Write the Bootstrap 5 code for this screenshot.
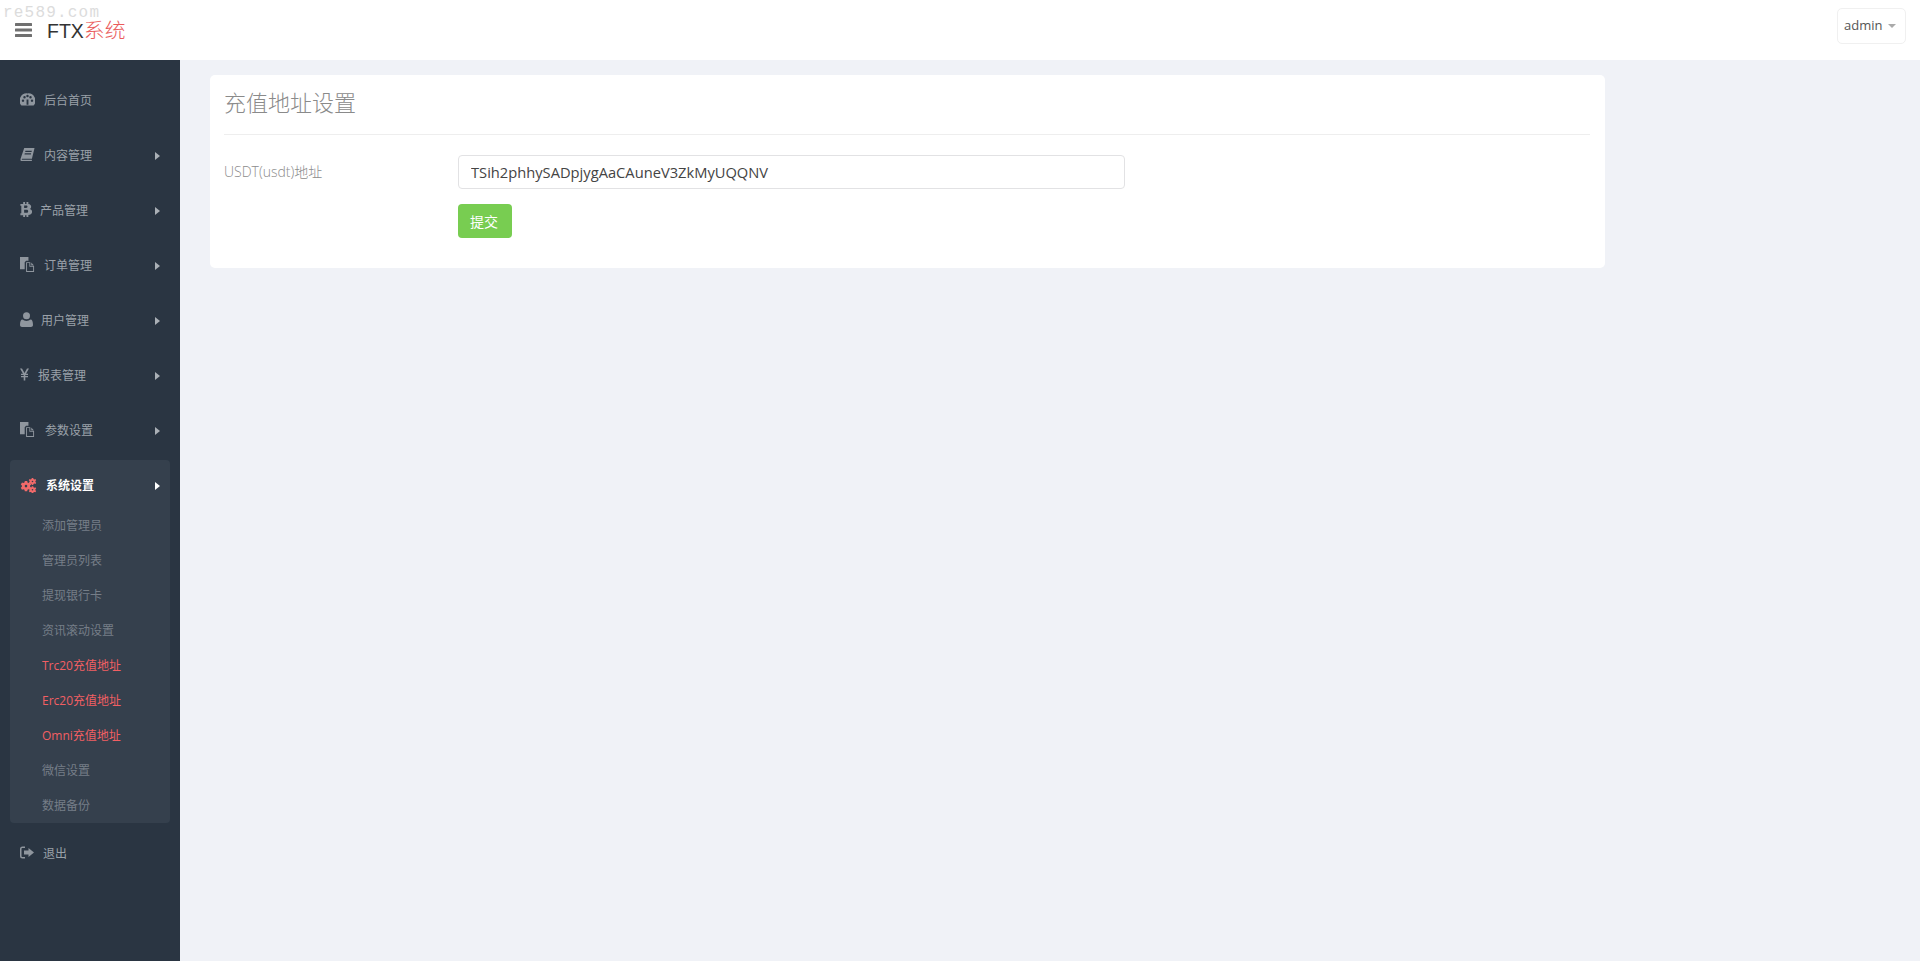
<!DOCTYPE html>
<html lang="zh-CN">
<head>
<meta charset="utf-8">
<title>FTX系统</title>
<link rel="stylesheet" href="https://cdn.jsdelivr.net/npm/bootstrap@5.3.0/dist/css/bootstrap.min.css">
<style>
html,body{height:100%;overflow:hidden}
body{background:#f0f2f7;font-family:"Open Sans","Noto Sans CJK SC",sans-serif;font-size:13px;color:#888}
.topbar{height:60px;background:#fff;padding:0 14px 0 15px;position:relative}
.watermark{position:absolute;left:3px;top:7px;font-family:"Liberation Mono",monospace;font-size:16px;letter-spacing:1.2px;color:#dcdcdc;line-height:12px}
.burger{width:17px;height:14px;margin-top:0;color:#707070}
.brand{font-size:19.5px;margin-left:15px;color:#333;line-height:20px;font-family:"Liberation Sans","Noto Sans CJK SC",sans-serif;font-weight:300;margin-top:1px}
.brand span{color:#ea5a5a;font-size:20.8px}
.userbtn{height:36px;width:69px;border:1px solid #f0f0f0;border-radius:5px;background:#fff;color:#555;font-size:13px;padding:0 0 0 6px;margin-top:-9px;text-align:left}
.caretmark{display:inline-block;border-left:4px solid transparent;border-right:4px solid transparent;border-top:4px solid #aaa;margin-left:6px;vertical-align:2px}
.layout{height:901px}
.sidebar{width:180px;flex:none;background:#2a3542;padding:18px 10px 0;font-size:12px}
.menuitem{height:45px;margin-bottom:10px;padding:0 10px;color:#9aa1a9;text-decoration:none}
.menuicon{width:15px;height:15px;fill:#8f969e;flex:none;margin-top:-2px}
.menuarrow{border-top:4px solid transparent;border-bottom:4px solid transparent;border-left:5px solid #aab0b6;margin-left:auto;margin-right:0}
.activegroup{background:#35404d;border-radius:4px;margin-top:-3px;margin-bottom:8px;height:363px}
.activegroup .menuitem{color:#fff;margin-bottom:0;height:48px;padding-top:4px;font-weight:600}
.activegroup .menuarrow{border-left-color:#fff}
.activegroup .menuicon{fill:#f26a6a;width:17px}
.submenu a{display:block;height:35px;line-height:35px;padding-left:32px;color:#767e88;text-decoration:none}
.submenu a.hot{color:#f25f63}
.mainarea{padding:15px 0 0 30px;width:1425px}
.panel{background:#fff;border-radius:5px;padding:0 15px 0 14px;height:193px;width:1395px}
.paneltitle{font-size:22px;font-weight:300;color:#8a8a8a;height:60px;line-height:54px;border-bottom:1px solid #eee;margin:0}
.fieldrow{margin-top:20px}
.fieldlabel{width:234px;flex:none;font-weight:300;line-height:34px;color:#8c8c8c;font-size:14px}
.addr{width:667px;height:34px;border:1px solid #e2e2e4;border-radius:4px;padding:0 12px;color:#444;font-size:14.7px;font-family:"Open Sans",sans-serif}
.submitbtn{display:block;width:54px;height:34px;margin:15px 0 0 234px;background:#78cd51;border:0;border-radius:4px;color:#fff;font-size:14px;padding:0 2px 0 0}
</style>
</head>
<body>
<header class="topbar d-flex align-items-center">
  <div class="watermark">re589.com</div>
  <svg class="burger" viewBox="0 0 17 14" fill="currentColor"><rect width="17" height="3" rx=".5"/><rect y="5.500" width="17" height="3" rx=".5"/><rect y="11" width="17" height="3" rx=".5"/></svg>
  <div class="brand">FTX<span>系统</span></div>
  <div class="ms-auto d-flex align-items-center"><button class="userbtn" type="button">admin<i class="caretmark"></i></button></div>
</header>
<div class="layout d-flex">
  <nav class="sidebar">
    <a class="menuitem d-flex align-items-center" href="#"><svg class="menuicon" viewBox="0 0 16 16"><path fill-rule="evenodd" d="M8 1.500A7.800 7.800 0 0 0 1.500 14.500h13A7.800 7.800 0 0 0 8 1.500ZM3.200 10.500a1.300 1.300 0 1 1 0-2.600 1.300 1.300 0 0 1 0 2.600Zm1.600-3.600a1.300 1.300 0 1 1 0-2.600 1.300 1.300 0 0 1 0 2.600ZM8 5.500a1.300 1.300 0 1 1 0-2.600 1.300 1.300 0 0 1 0 2.600Zm3.200 1.400a1.300 1.300 0 1 1 0-2.600 1.300 1.300 0 0 1 0 2.600Zm1.600 3.600a1.300 1.300 0 1 1 0-2.600 1.300 1.300 0 0 1 0 2.600ZM7 13.500V8h2v5.500Z"/></svg><span style="margin-left:9px">后台首页</span></a>
    <a class="menuitem d-flex align-items-center" href="#"><svg class="menuicon" viewBox="0 0 16 16"><path fill-rule="evenodd" d="M4.500 1H15.500l-2.800 11.500H2.800c-.7 0-.9.5-.8 1h10.500l.3.500-.3 1H1.800C.6 15 .3 14 .6 12.500Zm1.300 3-.3 1.200h6.800l.3-1.200Zm-.7 2.700-.3 1.200h6.800l.3-1.200Z"/></svg><span style="margin-left:9px">内容管理</span><i class="menuarrow"></i></a>
    <a class="menuitem d-flex align-items-center" href="#"><svg class="menuicon" style="width:12px" viewBox="0 0 12 16"><path fill-rule="evenodd" d="M3 0h2v2h1.500V0h2v2.200c2 .3 3 1.400 3 2.800 0 1.200-.7 2-1.600 2.400 1.500.4 2.600 1.400 2.600 2.900 0 2-1.500 3.300-4 3.500V16h-2v-2H5v2H3v-2H0v-2h1V4H0V2h3Zm1 3.800v2.500h2.200c.9 0 1.400-.5 1.400-1.200S7.100 3.800 6.200 3.800Zm0 4.400v3.300h2.700c1 0 1.600-.7 1.600-1.700s-.6-1.600-1.600-1.600Z"/></svg><span style="margin-left:8px">产品管理</span><i class="menuarrow"></i></a>
    <a class="menuitem d-flex align-items-center" href="#"><svg class="menuicon" viewBox="0 0 16 16"><path d="M0 0h9v4H6.500L5 5.500V13H0Z"/><path fill-rule="evenodd" d="M6.500 5.500H11V9.500h4V16H6.500Zm1 1V15H14V10.500h-4V6.500Z"/><path d="M12 5.800 15 9h-3Z"/></svg><span style="margin-left:9px">订单管理</span><i class="menuarrow"></i></a>
    <a class="menuitem d-flex align-items-center" href="#"><svg class="menuicon" style="width:13px" viewBox="0 0 13 15"><circle cx="6.500" cy="3.800" r="3.500"/><path d="M0 13c0-3.500.8-5.500 2.500-5.500 1 .9 2.500 1.400 4 1.400s3-.5 4-1.400C12.200 7.500 13 9.500 13 13c0 1.300-.9 2-2 2H2c-1.100 0-2-.7-2-2Z"/></svg><span style="margin-left:8px">用户管理</span><i class="menuarrow"></i></a>
    <a class="menuitem d-flex align-items-center" href="#"><svg class="menuicon" style="width:9px" viewBox="0 0 9 12"><path d="M0 0h2l2.500 4.500L7 0h2L6 5.300h2v1.200H5.300v1H8v1.200H5.300V12H3.700V8.700H1V7.500h2.700v-1H1V5.300h2Z"/></svg><span style="margin-left:9px">报表管理</span><i class="menuarrow"></i></a>
    <a class="menuitem d-flex align-items-center" href="#"><svg class="menuicon" viewBox="0 0 16 16"><path d="M0 0h9v4H6.500L5 5.500V13H0Z"/><path fill-rule="evenodd" d="M6.500 5.500H11V9.500h4V16H6.500Zm1 1V15H14V10.500h-4V6.500Z"/><path d="M12 5.800 15 9h-3Z"/></svg><span style="margin-left:10px">参数设置</span><i class="menuarrow"></i></a>
    <div class="activegroup">
      <a class="menuitem d-flex align-items-center" href="#"><svg class="menuicon" viewBox="0 0 17 15"><path fill-rule="evenodd" d="M4.800 3h2.400l.3 1.400 1.100.6 1.400-.5 1.200 2-1.100 1v1.200l1.100 1-1.200 2-1.400-.5-1.100.6-.3 1.400H4.800l-.3-1.400-1.100-.6-1.400.5-1.200-2 1.100-1V7.500l-1.100-1 1.200-2 1.400.5 1.100-.6ZM6 6.800a1.300 1.300 0 1 0 0 2.600 1.300 1.300 0 0 0 0-2.600Z"/><path fill-rule="evenodd" d="M13.200 0l.3 1 .9.4 1-.4.800 1.300-.8.7v1l.8.7-.8 1.300-1-.4-.9.4-.3 1h-1.400l-.3-1-.9-.4-1 .4-.8-1.300.8-.7v-1l-.8-.7.800-1.300 1 .4.900-.4.300-1Zm-.7 2.700a.8.8 0 1 0 0 1.600.8.8 0 0 0 0-1.600Z"/><path fill-rule="evenodd" d="M13.200 8.300l.3 1 .9.4 1-.4.800 1.300-.8.7v1l.8.7-.8 1.300-1-.4-.9.4-.3 1h-1.400l-.3-1-.9-.4-1 .4-.8-1.300.8-.7v-1l-.8-.7.800-1.300 1 .4.900-.4.300-1Zm-.7 2.700a.8.8 0 1 0 0 1.600.8.8 0 0 0 0-1.600Z"/></svg><span style="margin-left:9px">系统设置</span><i class="menuarrow"></i></a>
      <div class="submenu">
        <a href="#">添加管理员</a>
        <a href="#">管理员列表</a>
        <a href="#">提现银行卡</a>
        <a href="#">资讯滚动设置</a>
        <a href="#" class="hot">Trc20充值地址</a>
        <a href="#" class="hot">Erc20充值地址</a>
        <a href="#" class="hot">Omni充值地址</a>
        <a href="#">微信设置</a>
        <a href="#">数据备份</a>
      </div>
    </div>
    <a class="menuitem d-flex align-items-center" href="#"><svg class="menuicon" style="width:14px" viewBox="0 0 14 12"><path d="M5 0v1.500H2.500c-.6 0-1 .4-1 1v7c0 .6.4 1 1 1H5V12H2.500A2.500 2.500 0 0 1 0 9.500v-7A2.500 2.500 0 0 1 2.500 0Z"/><path d="M8.500 1.500 14 6l-5.500 4.500V8H4V4h4.500Z"/></svg><span style="margin-left:9px">退出</span></a>
  </nav>
  <main class="mainarea">
    <section class="panel">
      <h1 class="paneltitle">充值地址设置</h1>
      <form>
        <div class="fieldrow d-flex">
          <label class="fieldlabel" for="addr">USDT(usdt)地址</label>
          <input class="addr" id="addr" type="text" value="TSih2phhySADpjygAaCAuneV3ZkMyUQQNV">
        </div>
        <button class="submitbtn" type="button">提交</button>
      </form>
    </section>
  </main>
</div>
<script src="https://cdn.jsdelivr.net/npm/bootstrap@5.3.0/dist/js/bootstrap.bundle.min.js"></script>
</body>
</html>
